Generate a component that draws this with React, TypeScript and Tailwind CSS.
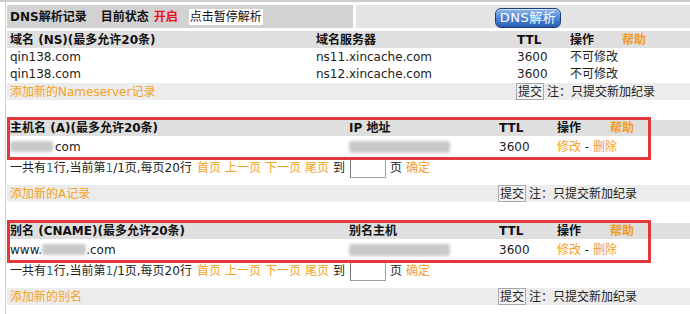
import React from "react";

const link = "text-[#f4a024]";

const Blur = ({ w, h = 11, className = "" }: { w: number; h?: number; className?: string }) => (
  <span
    className={`inline-block align-middle rounded-[3px] bg-[#c9c9c9] blur-[1.5px] ${className}`}
    style={{ width: w, height: h }}
  />
);

const SubmitRow = ({ label, cols }: { label: string; cols: string }) => (
  <div className={`grid ${cols} h-[17px] items-center bg-[#ececec]`}>
    <div className={`col-span-2 pl-[3px] ${link}`}>{label}</div>
    <div className="col-span-2 flex items-center pl-[2px]">
      <span className="flex h-[17px] items-center border border-[#a8a8a8] bg-[#f2f2f2] px-[1px] leading-none">
        提交
      </span>
      <span className="ml-[3px]">注：只提交新加纪录</span>
    </div>
  </div>
);

const Pager = () => (
  <div className="flex h-[22px] items-center pl-[3px]">
    <span>
      一共有<span className="text-[#2b6f80]">1</span>行,当前第
      <span className="text-[#2b6f80]">1</span>/1页,每页20行
    </span>
    <span className={`ml-[5px] ${link}`}>首页</span>
    <span className={`ml-[4px] ${link}`}>上一页</span>
    <span className={`ml-[4px] ${link}`}>下一页</span>
    <span className={`ml-[4px] ${link}`}>尾页</span>
    <span className="ml-[4px]">到</span>
    <span className="ml-[5px] h-[19px] w-[36px] border border-[#a0a0a0] border-t-[#7a7a7a] border-l-[#7a7a7a] bg-white" />
    <span className="ml-[4px]">页</span>
    <span className={`ml-[4px] ${link}`}>确定</span>
  </div>
);

const cols2 = "grid-cols-[339px_150px_58px_1fr]";

const Section = ({
  title,
  second,
  first,
  host,
  addLabel,
}: {
  title: string;
  second: string;
  first: React.ReactNode;
  host: React.ReactNode;
  addLabel: string;
}) => (
  <div>
    <div className="relative">
      <div className={`grid ${cols2} h-[16px] items-center bg-[#dfdfdf] font-bold text-[#111]`}>
        <div className="pl-[3px]">{title}</div>
        <div className="pl-[3px]">{second}</div>
        <div className="pl-[3px]">TTL</div>
        <div className="flex pl-[3px]">
          <span>操作</span>
          <span className="ml-[29px] text-[#f29a18]">帮助</span>
        </div>
      </div>
      <div className={`grid ${cols2} h-[21px] items-center`}>
        <div className="flex items-center pl-[3px]">{first}</div>
        <div className="flex items-center pl-[3px]">{host}</div>
        <div className="pl-[3px]">3600</div>
        <div className="pl-[3px]">
          <span className={link}>修改</span> - <span className={link}>删除</span>
        </div>
      </div>
      <div className="pointer-events-none absolute -top-[3px] left-0 h-[43px] w-[644px] border-[3px] border-[#e2393d]" />
    </div>
    <Pager />
    <div className="mt-[6px]">
      <SubmitRow label={addLabel} cols={cols2} />
    </div>
  </div>
);

export default function App() {
  const cols1 = "grid-cols-[306px_201px_53px_1fr]";
  const nsRows = ["ns11.xincache.com", "ns12.xincache.com"];

  return (
    <div
      className="h-[314px] w-[690px] overflow-hidden bg-white text-[12px] leading-[16px] text-[#222]"
      style={{ fontFamily: '"DejaVu Sans", "Noto Sans CJK SC", sans-serif' }}
    >
      <div className="h-[2px] bg-[#cdcdcd]" />
      <div className="ml-[5px] h-[312px] border-l border-[#cfcfcf] pl-[1px] pt-[3px]">
        {/* top bar */}
        <div className="flex h-[23px] gap-[3px]">
          <div className="flex w-[346px] items-center bg-[#d2d2d2] pl-[3px] font-bold text-[#111]">
            <span>DNS解析记录</span>
            <span className="ml-[14px]">目前状态</span>
            <span className="ml-[5px] text-[#e8101a]">开启</span>
            <span className="ml-[11px] flex h-[16px] items-center bg-white px-[1px] font-normal">
              点击暂停解析
            </span>
          </div>
          <div className="flex flex-1 items-start bg-[#e4e4e4] pl-[139px] pt-[3px]">
            <span className="flex h-[20px] w-[66px] items-center justify-center rounded-[6px] border border-[#1b3e78] bg-gradient-to-b from-[#8db8ee] via-[#4f86d4] to-[#2c5fb4] text-[13px] tracking-[0.5px] text-white shadow-[inset_0_1px_0_rgba(255,255,255,0.6)]">
              DNS解析
            </span>
          </div>
        </div>

        {/* NS records */}
        <div className={`mt-[3px] grid ${cols1} h-[17px] items-center bg-[#dfdfdf] font-bold text-[#111]`}>
          <div className="pl-[3px]">域名 (NS)(最多允许20条)</div>
          <div className="pl-[3px]">域名服务器</div>
          <div className="pl-[3px]">TTL</div>
          <div className="flex pl-[3px]">
            <span>操作</span>
            <span className="ml-[28px] text-[#f29a18]">帮助</span>
          </div>
        </div>
        {nsRows.map((ns) => (
          <div key={ns} className={`grid ${cols1} h-[17px] items-center`}>
            <div className="pl-[3px]">qin138.com</div>
            <div className="pl-[3px]">{ns}</div>
            <div className="pl-[3px]">3600</div>
            <div className="pl-[3px]">不可修改</div>
          </div>
        ))}
        <div className="mt-[1px]">
          <SubmitRow label="添加新的Nameserver记录" cols={cols1} />
        </div>

        {/* A records */}
        <div className="mt-[20px]">
          <Section
            title="主机名 (A)(最多允许20条)"
            second="IP 地址"
            first={
              <>
                <Blur w={43} />
                <span className="ml-[2px]">com</span>
              </>
            }
            host={<Blur w={101} h={12} />}
            addLabel="添加新的A记录"
          />
        </div>

        {/* CNAME records */}
        <div className="mt-[21px]">
          <Section
            title="别名 (CNAME)(最多允许20条)"
            second="别名主机"
            first={
              <>
                <span>www.</span>
                <Blur w={44} />
                <span>.com</span>
              </>
            }
            host={<Blur w={101} h={12} />}
            addLabel="添加新的别名"
          />
        </div>
      </div>
    </div>
  );
}
